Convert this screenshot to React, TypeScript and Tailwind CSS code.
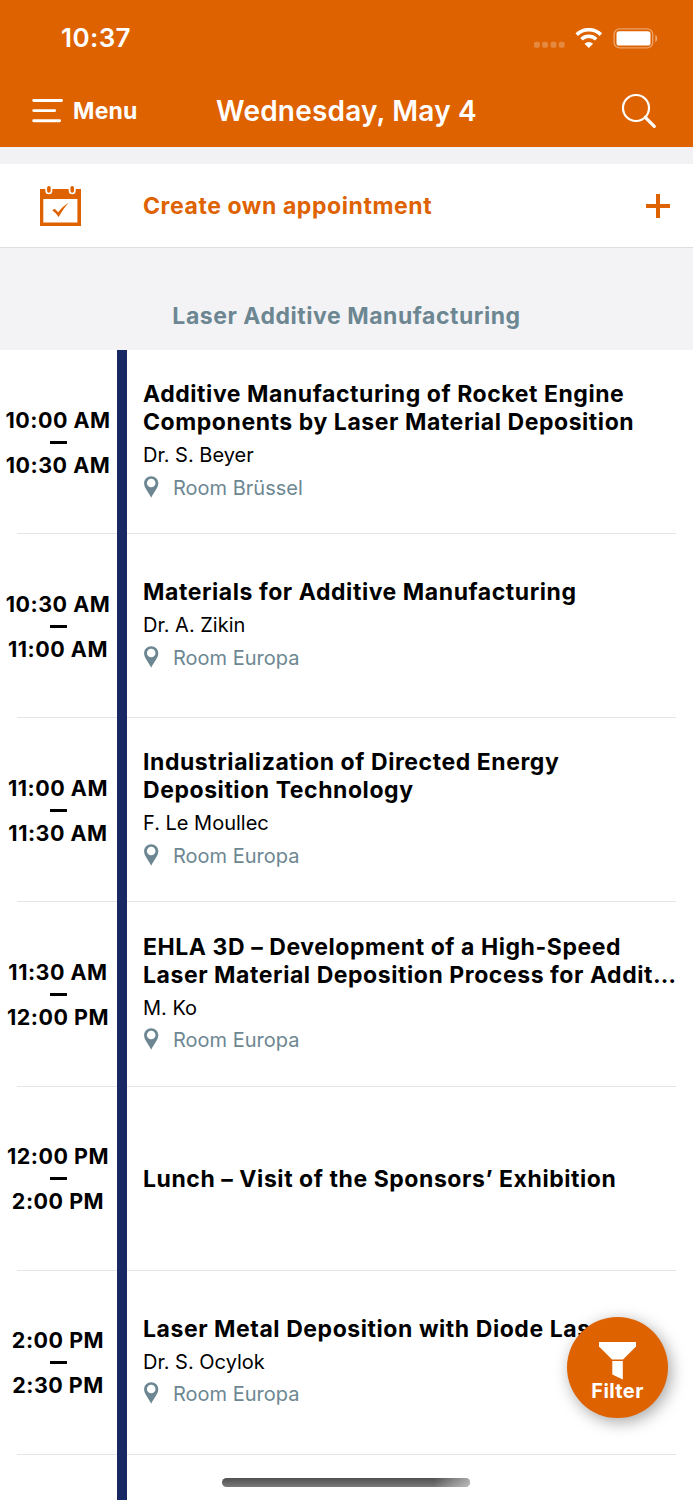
type Session = {
    start: string;
    end: string;
    title: string[];
    speaker?: string;
    room?: string;
};

const sessions: Session[] = [
    {
        start: "10:00 AM",
        end: "10:30 AM",
        title: ["Additive Manufacturing of Rocket Engine", "Components by Laser Material Deposition"],
        speaker: "Dr. S. Beyer",
        room: "Room Brüssel",
    },
    {
        start: "10:30 AM",
        end: "11:00 AM",
        title: ["Materials for Additive Manufacturing"],
        speaker: "Dr. A. Zikin",
        room: "Room Europa",
    },
    {
        start: "11:00 AM",
        end: "11:30 AM",
        title: ["Industrialization of Directed Energy", "Deposition Technology"],
        speaker: "F. Le Moullec",
        room: "Room Europa",
    },
    {
        start: "11:30 AM",
        end: "12:00 PM",
        title: ["EHLA 3D – Development of a High-Speed", "Laser Material Deposition Process for Addit…"],
        speaker: "M. Ko",
        room: "Room Europa",
    },
    {
        start: "12:00 PM",
        end: "2:00 PM",
        title: ["Lunch – Visit of the Sponsors’ Exhibition"],
    },
    {
        start: "2:00 PM",
        end: "2:30 PM",
        title: ["Laser Metal Deposition with Diode Lasers"],
        speaker: "Dr. S. Ocylok",
        room: "Room Europa",
    },
];

const StatusBar = () => (
    <div className="flex h-[75px] items-center justify-between pt-px pr-[35px] pl-[61px]">
        <span className="text-[26px] leading-8 font-semibold tracking-[0.4px]">10:37</span>
        <div className="flex items-center">
            <svg width="32" height="20" viewBox="0 0 32 20" fill="#fff" opacity="0.25">
                <rect x="0" y="13.8" width="5.8" height="6" rx="1.8" />
                <rect x="8.2" y="13.8" width="5.8" height="6" rx="1.8" />
                <rect x="16.6" y="13.8" width="5.8" height="6" rx="1.8" />
                <rect x="24.8" y="13.8" width="5.8" height="6" rx="1.8" />
            </svg>
            <svg className="ml-[9px]" width="28" height="20" viewBox="0 0 28 20" fill="none" stroke="#fff">
                <path d="M1.7 6.6a17.4 17.4 0 0 1 24.2 0" strokeWidth="3.6" />
                <path d="M6.4 11.3a10.6 10.6 0 0 1 14.8 0" strokeWidth="3.4" />
                <path d="M13.8 20l-4.3-4.3a6.2 6.2 0 0 1 8.600 0z" fill="#fff" stroke="none" />
            </svg>
            <svg className="ml-2.5" width="45" height="21" viewBox="0 0 45 21" fill="none">
                <rect x="1.1" y="0.9" width="38.6" height="19" rx="5.5" stroke="#fff" strokeOpacity="0.4" strokeWidth="1.4" />
                <rect x="3.5" y="3.3" width="34" height="14.2" rx="2.6" fill="#fff" />
                <path d="M42.3 6.7c1.2.6 1.9 2 1.9 3.7s-.7 3.1-1.9 3.7z" fill="#fff" fillOpacity="0.45" />
            </svg>
        </div>
    </div>
);

const NavBar = () => (
    <div className="grid h-[72px] grid-cols-[180px_1fr_180px] items-center">
        <button className="flex items-center pl-8">
            <svg width="32" height="26" viewBox="0 0 32 26" stroke="#fff" strokeWidth="2.9" strokeLinecap="round">
                <path d="M1.7 2.5H29.5M1.7 12.6H22.7M1.7 22.7H27.6" />
            </svg>
            <span className="ml-[9px] text-[23px] leading-7 font-[650] tracking-[0.2px]">Menu</span>
        </button>
        <h1 className="text-center text-[28px] leading-8 font-semibold tracking-[0.2px] whitespace-nowrap">
            Wednesday, May 4
        </h1>
        <svg className="mr-9 justify-self-end" width="36" height="36" viewBox="0 0 36 36" fill="none" stroke="#fff">
            <circle cx="15" cy="15" r="13" strokeWidth="2.2" />
            <path d="M24.3 24.3L33.3 33.3" strokeWidth="3.2" strokeLinecap="round" />
        </svg>
    </div>
);

const CalendarIcon = () => (
    <svg className="ml-10" width="42" height="42" viewBox="0 0 42 42">
        <path d="M0 4H41V41H0z" fill="#de6200" />
        <path d="M3.3 14H37.4V37.5H3.3z" fill="#fff" />
        <rect x="5.3" y="-2" width="7" height="11.2" rx="3.5" fill="#fff" />
        <rect x="28.7" y="-2" width="7" height="11.2" rx="3.5" fill="#fff" />
        <rect x="7.1" y="1" width="3.6" height="6.7" rx="1.8" fill="#de6200" />
        <rect x="30.4" y="1" width="3.6" height="6.7" rx="1.8" fill="#de6200" />
        <path
            d="M12.2 25.2L14.7 23.8L18.2 27.2C21.5 23 24.5 20.2 28.9 17.7C25 21.8 21.8 26 18.7 32.1C16.8 29.4 14.7 27 12.2 25.2z"
            fill="#de6200"
        />
    </svg>
);

const PinIcon = () => (
    <svg className="-mt-0.5" width="17" height="22" viewBox="-0.7 0 17 22">
        <path
            d="M7.5 0.3C3.5 0.3 0.4 3.3 0.4 7.2C0.4 11.8 4.7 15.8 7.5 21.7C10.3 15.8 14.6 11.8 14.6 7.2C14.6 3.3 11.5 0.3 7.5 0.3zM7.5 2.7a4.3 4.3 0 1 1 0 8.6a4.3 4.3 0 1 1 0-8.6z"
            fill="#6d8792"
            fillRule="evenodd"
        />
    </svg>
);

const SessionRow = ({ session }: { session: Session }) => (
    <div className="flex h-[184.15px]">
        <div className="flex w-[117px] flex-col items-center justify-center text-[21.5px] leading-[26px] font-[650] tracking-[0.5px]">
            <span className="-ml-px">{session.start}</span>
            <span className="my-[8px] h-[3px] w-[17px] bg-black" />
            <span className="-ml-px">{session.end}</span>
        </div>
        <div className="w-[10px] bg-[#182863]" />
        <div className={`flex flex-1 flex-col justify-center pl-4 whitespace-nowrap ${session.speaker ? "pb-[3.4px]" : ""}`}>
            <h3 className="text-[23px] leading-7 font-[650] tracking-[0.56px]">
                {session.title.map((line) => (
                    <span key={line} className="block">
                        {line}
                    </span>
                ))}
            </h3>
            {session.speaker && <p className="mt-[6px] text-[20px] leading-[26px]">{session.speaker}</p>}
            {session.room && (
                <p className="mt-[6.6px] flex items-center text-[20px] leading-[26px] text-[#6d8792]">
                    <PinIcon />
                    <span className="ml-[13px]">{session.room}</span>
                </p>
            )}
        </div>
    </div>
);

const Divider = () => (
    <div className="-mt-px flex h-px">
        <div className="ml-[17px] w-[100px] bg-[#e5e5e5]" />
        <div className="w-[10px]" />
        <div className="mr-[17px] flex-1 bg-[#e5e5e5]" />
    </div>
);

export default function App() {
    return (
        <div className="relative h-[1500px] w-[693px] overflow-hidden bg-white font-['Inter',sans-serif] text-black">
            <header className="h-[147px] bg-[#de6200] text-white">
                <StatusBar />
                <NavBar />
            </header>
            <div className="h-[17px] bg-[#f2f2f5]" />
            <div className="flex h-[84px] items-center border-b border-[#dedee0] text-[#de6200]">
                <CalendarIcon />
                <span className="ml-[61px] text-[23px] leading-7 font-[650] tracking-[0.58px]">Create own appointment</span>
                <svg className="mr-[23px] ml-auto" width="24" height="24" viewBox="0 0 24 24" stroke="#de6200" strokeWidth="4">
                    <path d="M12 0V24M0 12H24" />
                </svg>
            </div>
            <h2 className="flex h-[102px] items-end justify-center bg-[#f3f3f6] pb-5 text-[23px] leading-7 font-[650] tracking-[0.54px] text-[#6d8792]">
                Laser Additive Manufacturing
            </h2>
            <ul>
                {sessions.map((session) => (
                    <li key={session.start}>
                        <SessionRow session={session} />
                        <Divider />
                    </li>
                ))}
            </ul>
            <div className="ml-[117px] h-[46px] w-[10px] bg-[#182863]" />
            <button className="absolute right-[25px] bottom-[82px] flex h-[101px] w-[101px] flex-col items-center rounded-full bg-[#de6200] pt-[25px] text-white shadow-[3px_4px_16px_rgba(0,0,0,0.35)]">
                <svg width="38" height="38" viewBox="0 0 38 38" fill="#fff">
                    <path d="M0 0H37V4.5L24 17.6H13L0 4.5z" />
                    <path d="M13.3 19H23.8V37.5L13.3 32.5z" />
                </svg>
                <span className="-mt-px text-[20px] leading-6 font-[650] tracking-[0.4px]">Filter</span>
            </button>
            <div className="absolute bottom-[13px] left-[222px] h-[9px] w-[248px] overflow-hidden rounded-full bg-linear-to-b from-[#505050] to-[#7a7a7a]">
                <div className="ml-auto h-full w-9 bg-linear-to-r from-transparent to-white/50" />
            </div>
        </div>
    );
}
